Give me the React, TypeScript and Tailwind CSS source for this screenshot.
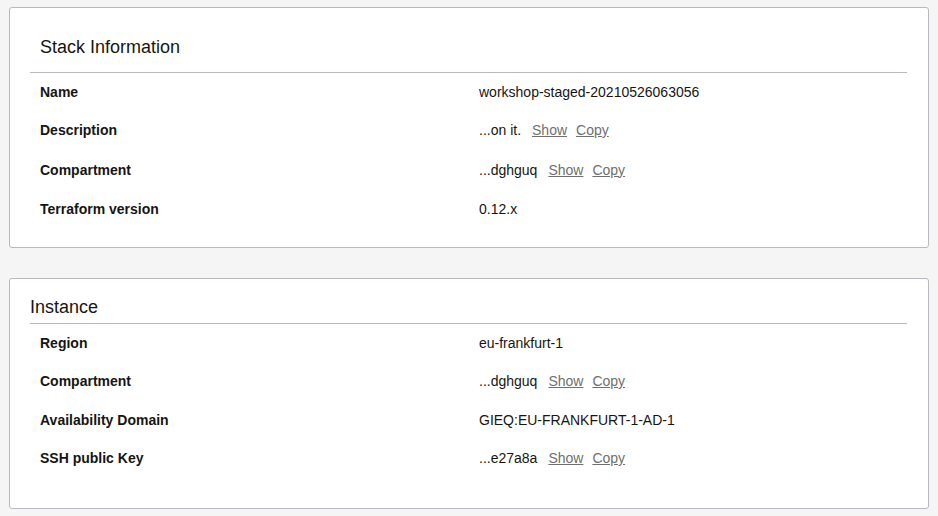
import React from 'react';

interface Row {
  label: string;
  value: string;
  masked?: boolean;
  h: string;
}

const stackRows: Row[] = [
  { label: 'Name', value: 'workshop-staged-20210526063056', h: 'h-[38px]' },
  { label: 'Description', value: '...on it.', masked: true, h: 'h-[39px]' },
  { label: 'Compartment', value: '...dghguq', masked: true, h: 'h-[40px]' },
  { label: 'Terraform version', value: '0.12.x', h: 'h-[39px]' },
];

const instanceRows: Row[] = [
  { label: 'Region', value: 'eu-frankfurt-1', h: 'h-[38px]' },
  { label: 'Compartment', value: '...dghguq', masked: true, h: 'h-[39px]' },
  { label: 'Availability Domain', value: 'GIEQ:EU-FRANKFURT-1-AD-1', h: 'h-[38px]' },
  { label: 'SSH public Key', value: '...e27a8a', masked: true, h: 'h-[39px]' },
];

const InfoRows: React.FC<{ rows: Row[] }> = ({ rows }) => (
  <div>
    {rows.map((r) => (
      <div key={r.label} className={`grid grid-cols-[439px_1fr] items-center ${r.h}`}>
        <div className="pl-[10px] font-bold text-[14px] text-[#161513]">{r.label}</div>
        <div className="pl-[10px] text-[14px] text-[#161513] flex items-center">
          <span>{r.value}</span>
          {r.masked && (
            <>
              <a href="#" className="ml-[11px] text-[#6f6f6f] underline">Show</a>
              <a href="#" className="ml-[9px] text-[#6f6f6f] underline">Copy</a>
            </>
          )}
        </div>
      </div>
    ))}
  </div>
);

export default function App() {
  return (
    <div className="min-h-[516px] bg-[#f5f5f5] pt-[7px] pl-[9px] font-['Liberation_Sans',Arial,sans-serif]">
      <div className="w-[920px] bg-white border border-[#b6b9bf] rounded-[3px] pt-[28px] pb-[18px] pl-[20px] pr-[21px]">
        <h2 className="pl-[10px] text-[18px] leading-[22px] text-[#161513]">Stack Information</h2>
        <div className="mt-[14px] h-px bg-[#b6b9bf]" />
        <InfoRows rows={stackRows} />
      </div>

      <div className="mt-[30px] w-[920px] bg-white border border-[#b6b9bf] rounded-[3px] pt-[17px] pb-[30px] pl-[20px] pr-[21px]">
        <h2 className="text-[18px] leading-[22px] text-[#161513]">Instance</h2>
        <div className="mt-[5px] h-px bg-[#b6b9bf]" />
        <InfoRows rows={instanceRows} />
      </div>
    </div>
  );
}
